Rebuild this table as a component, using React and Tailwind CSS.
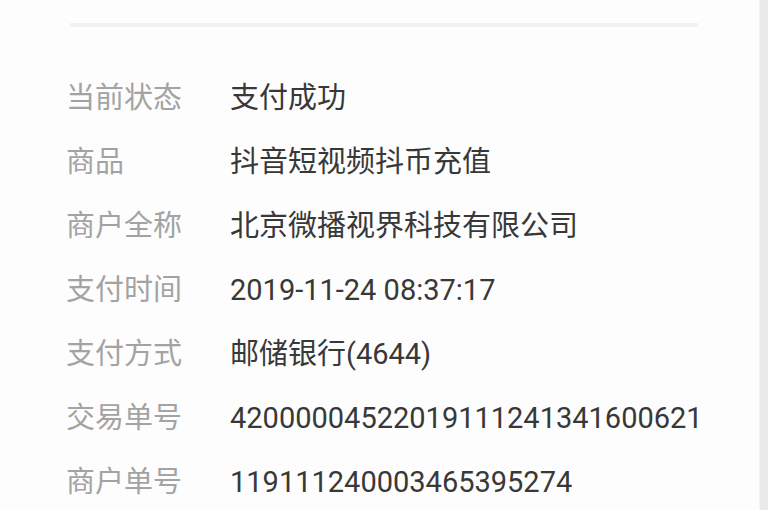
export default function App() {
  const rows = [
    ["当前状态", "支付成功"],
    ["商品", "抖音短视频抖币充值"],
    ["商户全称", "北京微播视界科技有限公司"],
    ["支付时间", "2019-11-24 08:37:17"],
    ["支付方式", "邮储银行(4644)"],
    ["交易单号", "42000004522019111241341600621"],
    ["商户单号", "119111240003465395274"],
  ];
  return (
    <div
      className="w-[768px] h-[510px] overflow-hidden bg-[#fdfdfd] flex"
      style={{ fontFamily: 'Roboto, "Noto Sans CJK SC", sans-serif' }}
    >
      <div className="flex-1 flex flex-col overflow-hidden">
        <div className="h-[23px] shrink-0" />
        <div className="ml-[70px] w-[628px] h-[4px] bg-[#f1f1f1] shrink-0" />
        <div className="h-[39px] shrink-0" />
        <div className="flex flex-col pl-[66px] shrink-0">
          {rows.map(([k, v]) => (
            <div key={k} className="flex h-[64px] shrink-0 items-center text-[29px] leading-[64px]">
              <div className="w-[164px] text-[#a3a3a3] shrink-0">{k}</div>
              <div className="text-[#383838] whitespace-nowrap">{v}</div>
            </div>
          ))}
        </div>
      </div>
      <div className="w-[9px] h-full bg-[#eaeaea] border-l border-[#f3f3f3]" />
    </div>
  );
}
